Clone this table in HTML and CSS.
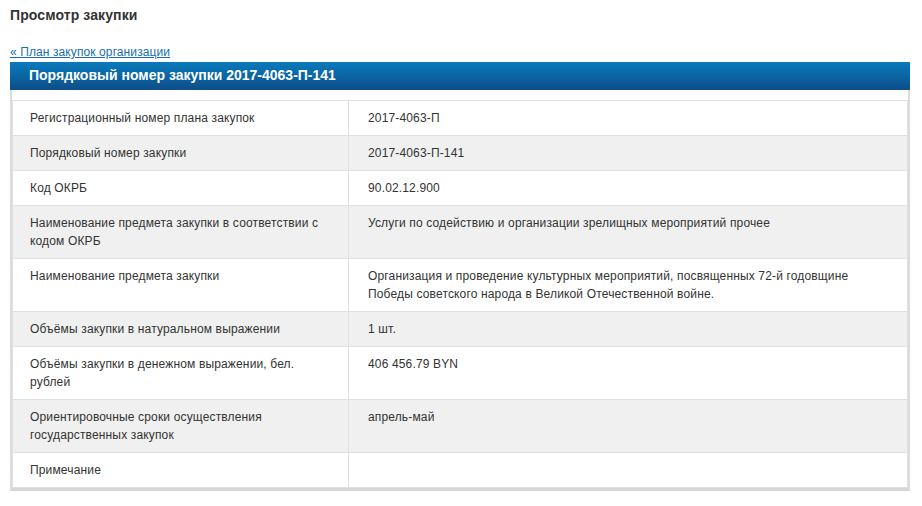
FILE: index.html
```html
<!DOCTYPE html>
<html lang="ru">
<head>
    <meta charset="UTF-8">
    <title>Просмотр закупки</title>
    <link rel="stylesheet" href="styles.css">
</head>
<body>
    <h1 class="page-title">Просмотр закупки</h1>
    <div class="back-link"><a href="#">« План закупок организации</a></div>

    <div class="panel">
        <div class="panel-head">Порядковый номер закупки 2017-4063-П-141</div>
        <div class="panel-body">
            <table class="info-table">
                <tr>
                    <td class="label">Регистрационный номер плана закупок</td>
                    <td>2017-4063-П</td>
                </tr>
                <tr class="alt">
                    <td class="label">Порядковый номер закупки</td>
                    <td>2017-4063-П-141</td>
                </tr>
                <tr>
                    <td class="label">Код ОКРБ</td>
                    <td>90.02.12.900</td>
                </tr>
                <tr class="alt">
                    <td class="label">Наименование предмета закупки в соответствии с кодом ОКРБ</td>
                    <td>Услуги по содействию и организации зрелищных мероприятий прочее</td>
                </tr>
                <tr>
                    <td class="label">Наименование предмета закупки</td>
                    <td>Организация и проведение культурных мероприятий, посвященных 72-й годовщине Победы советского народа в Великой Отечественной войне.</td>
                </tr>
                <tr class="alt">
                    <td class="label">Объёмы закупки в натуральном выражении</td>
                    <td>1 шт.</td>
                </tr>
                <tr>
                    <td class="label">Объёмы закупки в денежном выражении, бел. рублей</td>
                    <td>406 456.79 BYN</td>
                </tr>
                <tr class="alt">
                    <td class="label">Ориентировочные сроки осуществления государственных закупок</td>
                    <td>апрель-май</td>
                </tr>
                <tr>
                    <td class="label">Примечание</td>
                    <td></td>
                </tr>
            </table>
        </div>
    </div>
</body>
</html>
```

FILE: styles.css
```css
body {
    font-family: 'Liberation Sans', Arial, sans-serif;
    font-size: 12px;
    color: #333;
    margin: 0;
    padding: 0 10px;
    background-color: #fff;
}
.page-title {
    font-size: 14px;
    font-weight: bold;
    line-height: 18px;
    margin: 6px 0 0;
    color: #333;
    letter-spacing: 0.1px;
}
.back-link {
    margin-top: 20px;
    line-height: 16px;
    height: 18px;
}
.back-link a {
    color: #1a6fa8;
    text-decoration: underline;
    letter-spacing: 0.1px;
}
.panel {
    width: 900px;
}
.panel-head {
    height: 28px;
    line-height: 26px;
    padding-left: 19px;
    font-size: 14px;
    font-weight: bold;
    color: #fff;
    background: linear-gradient(to bottom, #0a7abb 0%, #0a6aa8 40%, #0d4d87 100%);
}
.panel-body {
    border-left: 2px solid #dcdcdc;
    border-right: 2px solid #dcdcdc;
    border-bottom: 3px solid #d6d6d6;
    padding-top: 10px;
    background-color: #fcfeff;
}
.info-table {
    width: 896px;
    border-collapse: collapse;
    background-color: #fff;
}
.info-table td {
    border: 1px solid #e0e0e0;
    padding: 8px 18px 8px 19px;
    line-height: 18px;
    vertical-align: top;
    letter-spacing: 0.15px;
}
.info-table td.label {
    width: 300px;
    padding-left: 17px;
}
.info-table tr.alt td {
    background-color: #f0f0f0;
}
```
